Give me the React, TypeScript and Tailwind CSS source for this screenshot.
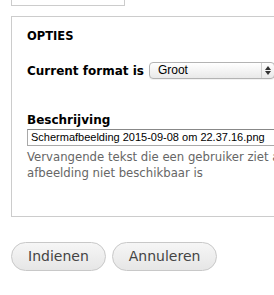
export default function App() {
  const lucida = { fontFamily: '"DejaVu Sans", Verdana, sans-serif' };
  const helv = { fontFamily: '"Liberation Sans", Arial, sans-serif' };
  return (
    <div className="relative w-[274px] h-[295px] overflow-hidden bg-white" style={lucida}>
      <div className="ml-[11px] mt-[-10px] w-[114px] h-[16px] border border-[#cccccc]" />
      <div className="ml-[11px] mt-[10px] w-[340px] h-[201px] border border-[#cccccc] pl-[15px] pt-[11px]">
        <div className="text-[11.5px] font-bold text-black leading-[16px]">OPTIES</div>
        <div className="mt-[18px] flex items-center">
          <span className="text-[12px] font-bold text-black leading-[16px]">Current format is</span>
          <div className="ml-[5px] relative h-[17px] w-[126px] rounded-[4px] border border-[#b3b3b3] bg-gradient-to-b from-[#ffffff] to-[#e9e9e9] flex items-center shadow-[0_1px_0_rgba(0,0,0,0.05)]">
            <span className="pl-[8px] text-[12px] text-black leading-[15px]" style={helv}>Groot</span>
            <div className="absolute right-0 top-0 h-full w-[13px] border-l border-[#d0d0d0] flex flex-col items-center justify-center gap-[1px]">
              <svg width="6" height="4" viewBox="0 0 6 4"><path d="M0 4 L3 0 L6 4 Z" fill="#333" /></svg>
              <svg width="6" height="4" viewBox="0 0 6 4"><path d="M0 0 L3 4 L6 0 Z" fill="#333" /></svg>
            </div>
          </div>
        </div>
        <div className="mt-[33px] text-[12px] font-bold text-black leading-[16px]">Beschrijving</div>
        <div className="mt-[1px] h-[17px] w-[300px] border border-[#a9a9a9] border-t-[#888] flex items-center pl-[3px]">
          <span className="text-[11px] text-black leading-[15px] whitespace-nowrap" style={helv}>Schermafbeelding 2015-09-08 om 22.37.16.png</span>
        </div>
        <div className="mt-[3px] text-[11.7px] text-[#666666] leading-[16px] w-[300px]">
          Vervangende tekst die een gebruiker ziet als de afbeelding niet beschikbaar is
        </div>
      </div>
      <div className="ml-[11px] mt-[25px] flex gap-[6px]">
        <button className="h-[29px] px-[16px] rounded-full border border-[#c8c8c8] bg-gradient-to-b from-[#f6f6f6] to-[#e6e6e6] text-[14px] text-[#444444]">Indienen</button>
        <button className="h-[29px] px-[16px] rounded-full border border-[#c8c8c8] bg-gradient-to-b from-[#f6f6f6] to-[#e6e6e6] text-[14px] text-[#444444]">Annuleren</button>
      </div>
    </div>
  );
}
